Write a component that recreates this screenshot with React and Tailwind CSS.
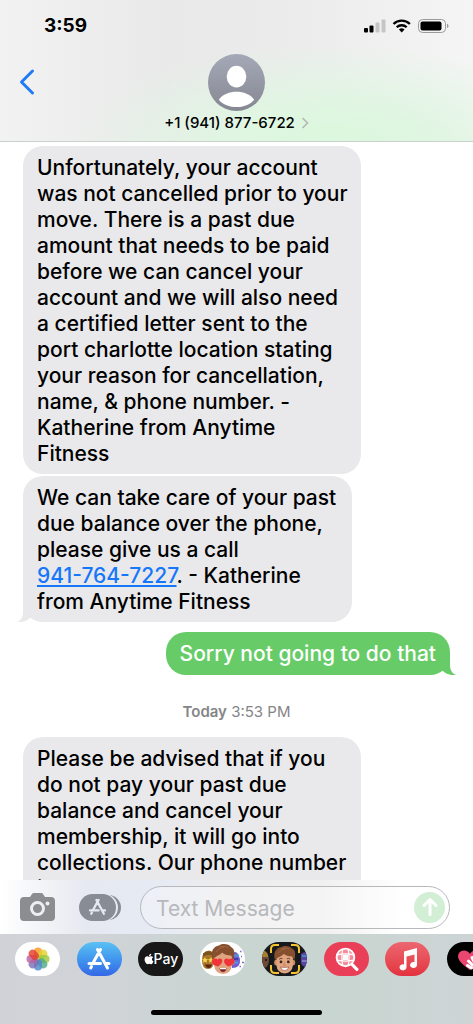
import React from 'react';
import { FaApple } from 'react-icons/fa';

const accountMessage = `Unfortunately, your account
was not cancelled prior to your
move. There is a past due
amount that needs to be paid
before we can cancel your
account and we will also need
a certified letter sent to the
port charlotte location stating
your reason for cancellation,
name, & phone number. -
Katherine from Anytime
Fitness`;

const collectionsMessage = `Please be advised that if you
do not pay your past due
balance and cancel your
membership, it will go into
collections. Our phone number
is 941-764-7227.`;

const StatusBar = () => (
  <div className="flex h-[52px] items-center justify-between pl-11 pr-6">
    <time className="text-[19px] font-bold leading-6">3:59</time>
    <svg viewBox="0 0 85 16" className="h-4 w-[85px]" aria-label="Signal, Wi-Fi and battery">
      <rect x="0" y="10" width="4" height="4.5" rx="1" />
      <rect x="5.5" y="7.5" width="4" height="7" rx="1" />
      <rect x="11.5" y="4.5" width="4" height="10" rx="1" fill="#c5c5c5" />
      <rect x="17.5" y="1.5" width="4" height="13" rx="1" fill="#c5c5c5" />
      <g fill="none" stroke="#000" strokeWidth="2.3">
        <path d="M29.5 6a11.8 11.8 0 0 1 16.4 0" />
        <path d="M32.7 9.3a7.1 7.1 0 0 1 10 0" />
      </g>
      <path d="M34.9 11.6a4 4 0 0 1 5.6 0l-2.8 2.9z" />
      <rect x="54.5" y="1.5" width="27" height="13" rx="4" fill="none" stroke="#9b9b9b" />
      <rect x="56.5" y="3.5" width="21" height="9" rx="2" />
      <path d="M83 5.8c2 .7 2 3.7 0 4.4z" fill="#9b9b9b" />
    </svg>
  </div>
);

const Header = () => (
  <header className="shrink-0 border-b border-[#c9cfca] bg-[radial-gradient(ellipse_55%_75%_at_70%_105%,#daf8dc_0%,#e0f6e2_40%,transparent_100%),linear-gradient(to_right,#f2f2f2,#e9e9e9_35%,#ebebeb_60%,#f5f5f5)]">
    <StatusBar />
    <div className="grid h-[89px] grid-cols-[1fr_auto_1fr] items-start">
      <button aria-label="Back" className="mt-4 ml-[18px] w-5">
        <svg viewBox="0 0 20 28" className="h-7 w-5" fill="none" stroke="#2079f5" strokeWidth="3" strokeLinecap="round" strokeLinejoin="round">
          <path d="M14.5 3 3.5 14l11 11" />
        </svg>
      </button>
      <button className="flex flex-col items-center pt-0.5">
        <svg viewBox="0 0 58 58" className="h-[57px] w-[57px]">
          <defs>
            <linearGradient id="avatar" x1="0" y1="0" x2="0" y2="1">
              <stop offset="0" stopColor="#a5a9b7" />
              <stop offset="1" stopColor="#858892" />
            </linearGradient>
          </defs>
          <circle cx="29" cy="29" r="29" fill="url(#avatar)" />
          <ellipse cx="29" cy="23" rx="10" ry="11" fill="#fff" />
          <path d="M11 46.5C15 41 22 38.5 29 38.5S43 41 47 46.5C43 51.5 36 54 29 54S15 51.5 11 46.5z" fill="#fff" />
        </svg>
        <span className="flex items-center gap-1.5 text-[15px] font-medium leading-6">
          +1 (941) 877-6722
          <svg viewBox="0 0 8 12" className="h-3 w-2" fill="none" stroke="#b3bbb4" strokeWidth="1.7">
            <path d="m1.5 1 5 5-5 5" />
          </svg>
        </span>
      </button>
    </div>
  </header>
);

const Messages = () => (
  <main className="flex min-h-0 flex-1 flex-col overflow-hidden bg-white px-[23px] pt-1 text-[21px] font-medium leading-[26px]">
    <p className="w-[338px] shrink-0 whitespace-pre rounded-[20px] bg-[#e9e9eb] px-3.5 pt-[9px] pb-[7px]">{accountMessage}</p>
    <div className="relative mt-0.5 w-[329px] shrink-0">
      <svg viewBox="0 0 24 22" className="absolute bottom-0 -left-1.5 h-[22px] w-6" fill="#e9e9eb">
        <path d="M6 0v12c0 5-2 8.5-6 10 5 .5 10-.8 13-4l11-4V0z" />
      </svg>
      <p className="relative whitespace-pre rounded-[20px] bg-[#e9e9eb] px-3.5 pt-[9px] pb-[7px]">
        {'We can take care of your past\ndue balance over the phone,\nplease give us a call\n'}
        <a href="tel:941-764-7227" className="text-[#1677fb] underline decoration-2 underline-offset-2">941-764-7227</a>
        {'. - Katherine\nfrom Anytime Fitness'}
      </p>
    </div>
    <div className="relative mt-2.5 shrink-0 self-end">
      <svg viewBox="0 0 24 22" className="absolute -right-1.5 bottom-0 h-[22px] w-6" fill="#67cc68">
        <path d="M18 0v12c0 5 2 8.5 6 10-5 .5-10-.8-13-4L0 14V0z" />
      </svg>
      <p className="relative rounded-[20px] bg-[#67cc68] px-3.5 pt-[9px] pb-2 text-white">Sorry not going to do that</p>
    </div>
    <p className="mt-[25px] mb-[13px] shrink-0 text-center text-[15px] leading-6 font-normal text-[#858587]">
      <span className="font-semibold">Today</span> 3:53 PM
    </p>
    <p className="w-[338px] shrink-0 whitespace-pre rounded-[20px] bg-[#e9e9eb] px-3.5 pt-[9px] pb-[7px]">{collectionsMessage}</p>
  </main>
);

const appStorePath = 'M13.5 2.5 6 16M10.5 2.5 20.5 21M2 16.5h11.5M18.5 16.5H22M4.5 19.5l-.8 1.5';

const ComposeBar = () => (
  <form className="flex h-[54px] shrink-0 items-center bg-[linear-gradient(to_right,#fff,#e6e9f0_18%,#e5eaf4_32%,#ececee_46%,#f0f0f0_68%,#fff_85%)] pr-[23px] pl-5" onSubmit={(e) => e.preventDefault()}>
    <button type="button" aria-label="Camera">
      <svg viewBox="0 0 35 28" className="h-7 w-[35px]">
        <path d="M4 4h6l2-3q.5-1 2-1h7q1.5 0 2 1l2 3h6q4 0 4 4v16q0 4-4 4H4q-4 0-4-4V8q0-4 4-4z" fill="#8c8d90" />
        <circle cx="17.5" cy="15.5" r="6" fill="none" stroke="#eceef1" strokeWidth="3" />
        <circle cx="27.5" cy="10.5" r="2" fill="#eceef1" />
      </svg>
    </button>
    <button type="button" aria-label="Apps" className="ml-6">
      <svg viewBox="0 0 42 27" className="h-[27px] w-[42px]">
        <rect x="10" y="1" width="32" height="25" rx="12.5" fill="#888c95" />
        <rect x="4" y="0" width="35" height="27" rx="13.5" fill="#e6eaf3" />
        <rect x="0" y="0" width="37" height="27" rx="13.5" fill="#888c95" />
        <path d={appStorePath} transform="translate(9.5 4) scale(.75)" fill="none" stroke="#e6e9ef" strokeWidth="3" strokeLinecap="round" />
      </svg>
    </button>
    <div className="ml-[19px] flex h-[43px] min-w-0 flex-1 items-center rounded-full border border-[#b7b8bb] bg-white/30 pr-1 pl-[15px]">
      <input aria-label="Text Message" placeholder="Text Message" className="min-w-0 flex-1 bg-transparent pt-[3px] text-[21px] leading-[26px] outline-none placeholder:text-[#b7b8bb]" />
      <button aria-label="Send" className="flex h-[31px] w-[31px] items-center justify-center rounded-full bg-[#d2efd5]">
        <svg viewBox="0 0 18 20" className="h-5 w-[18px]" fill="none" stroke="#fff" strokeWidth="3" strokeLinecap="round" strokeLinejoin="round">
          <path d="M9 17.5V3M3 8.5 9 2.5l6 6" />
        </svg>
      </button>
    </div>
  </form>
);

const PhotosIcon = () => (
  <svg viewBox="-12 -12 24 24" className="h-6 w-6">
    {['#f59a23', '#e0d22f', '#9cc83c', '#52ab88', '#4f88cb', '#7d70b6', '#b9609f', '#e2402f'].map((color, i) => (
      <rect key={color} x="-4" y="-11.5" width="8" height="11" rx="4" fill={color} opacity=".82" transform={`rotate(${i * 45})`} />
    ))}
  </svg>
);

// Shared face for the two sticker apps
const Face = ({ hearts }) => (
  <g>
    <ellipse cx="13.5" cy="20" rx="2" ry="3" fill="#cf8a63" />
    <ellipse cx="32.5" cy="20" rx="2" ry="3" fill="#cf8a63" />
    <path d="M14 15q0-5 9-5t9 5v8q-1 8.5-9 9-8-.5-9-9z" fill="#e0a580" />
    <path d="M12.5 17.5C10 9 14 4 19 3.5 23 1 29 2 31 5c4 2 4 7 2.5 12.5L31 13.500c-4 0-7-1-9-3-2 3-5 2.500-9.500 7z" fill="#86502f" />
    <path d="M16 10c2-3 5-4.5 8-4.5M19 5.500c3-1.500 6-1.500 9 0" fill="none" stroke="#a0653f" strokeWidth="1" />
    {hearts ? (
      <g>
        <path d="M18 24.5c-6-1.5-7-4.5-5.500-7 1.500-1.500 4-1.500 5 0 1-1.500 3.500-1.500 4.500 0 1 2.500-1 5-4 7zM28.500 24.500c-4-2-5-4.500-4-7 1-1.500 3.500-1.500 4.500 0 1-1.500 3.500-1.500 5 0 1.500 2.500-.5 5.500-5.500 7z" fill="#f0343a" />
        <path d="M19.500 26h7q-.5 4-3.500 4t-3.500-4z" fill="#7b252b" />
        <path d="M20 26h6v1.200h-6z" fill="#fff" />
      </g>
    ) : (
      <g>
        <circle cx="19" cy="19.500" r="1.500" fill="#3c2218" />
        <circle cx="27" cy="19.500" r="1.500" fill="#3c2218" />
        <path d="M17 16.500q2-1.500 3.500-.5M25.500 16q2-1 3.500.5" fill="none" stroke="#65351e" />
        <path d="m23 20-1 3q1 1 2 0" fill="none" stroke="#bd7a55" />
        <path d="M18.500 25q4.500 1 9 0-1 4-4.500 4t-4.500-4z" fill="#fff" stroke="#91463b" strokeWidth=".7" />
      </g>
    )}
  </g>
);

const StickersIcon = () => (
  <svg viewBox="0 0 45 34" className="h-full w-full">
    <path d="M2 18q0-9 7-9.500 5 .5 5 9.500t-6 9q-6 0-6-9z" fill="#a87427" />
    <path d="M3 11.500q5-4 10-1v3q-5-2-10 1z" fill="#7a5320" />
    <path d="m5 15 1 2 2 .2-1.500 1.500.5 2-2-1-2 1 .5-2L2 17.200l2-.2zM11 15l1 2 2 .2-1.500 1.500.5 2-2-1-2 1 .5-2L8 17.200l2-.2z" fill="#f6d44e" />
    <path d="M5 22.500h7q-1 3.500-3.500 3.500T5 22.500z" fill="#5a2715" />
    <path d="M32 12q3-4 6 0l2 5q1 9-8 9z" fill="#6d5fd3" />
    <path d="M33 13.500h6M33 20.500h5" stroke="#4c9be6" strokeWidth="2" />
    <path d="M34 17h4" stroke="#37309a" strokeWidth="1.500" />
    <path d="M40 9.500h1.500M42 20.500h2M41 14.500h1M39.500 24.500h1.500" stroke="#8c64dc" strokeWidth="1.500" />
    <Face hearts />
  </svg>
);

const MemojiIcon = () => (
  <svg viewBox="0 0 45 34" className="h-full w-full">
    <ellipse cx="2" cy="18" rx="5" ry="8" fill="#6b4b36" />
    <path d="M0 9q4-1 6 4v2H0z" fill="#a5802e" />
    <path d="M3 18h2" stroke="#2b1c14" strokeWidth="2" />
    <path d="M39 12q3-3 6-1v14q-5 0-6-4z" fill="#56449f" />
    <path d="M40 14h5" stroke="#4b83c4" strokeWidth="2" />
    <path d="M40 19h5" stroke="#8378c9" strokeWidth="2" />
    <g transform="translate(1.500 2) scale(.92)">
      <Face />
    </g>
    <path d="M9 11V7q0-4 4-4h4M29 3h4q4 0 4 4v4M37 23v4q0 4-4 4h-4M17 31h-4q-4 0-4-4v-4" fill="none" stroke="#f5c42e" strokeWidth="2" />
  </svg>
);

const ImageSearchIcon = () => (
  <svg viewBox="0 0 24 24" className="h-[25px] w-[25px]" fill="none" stroke="#fff" strokeWidth="1.5">
    <circle cx="11" cy="10" r="8.5" fill="#f28d9c" strokeWidth="1.8" />
    <path d="M3 7.500q8-2 16 0M3 12.500q8 2 16 0M8.500 2q-2 8 0 16M13.500 2q2 8 0 16" strokeWidth="1.2" />
    <path d="M8.500 7.500h5v5h-5z" fill="#fff" stroke="none" />
    <path d="m17.500 17 4.500 4.500" strokeWidth="3" strokeLinecap="round" />
  </svg>
);

const MusicIcon = () => (
  <svg viewBox="0 0 20 24" className="h-6 w-5" fill="#fff">
    <path d="M6 4.500 19 1v17a3.500 3 0 1 1-2.500-2.900V7.500l-8 2v10.800A3.500 3 0 1 1 6 17.500z" />
  </svg>
);

const HeartIcon = () => (
  <svg viewBox="0 0 45 34" className="h-full w-full">
    <path d="M23 28C13 21 9 16 12 11c3-4 9-3 11 1 2-4 8-5 11-1 3 5-1 10-11 17z" fill="#eb4670" />
    <g stroke="#fff" strokeWidth="3" strokeLinecap="round">
      <path d="m21.500 19 4 4M20.500 23.500l4 2.500M25 15.500l3 6" />
    </g>
  </svg>
);

const apps = [
  { name: 'Photos', bg: 'bg-white', icon: <PhotosIcon /> },
  {
    name: 'App Store',
    bg: 'bg-linear-to-b from-[#5ac1f3] to-[#3467e6]',
    icon: (
      <svg viewBox="0 0 24 24" className="h-6 w-6" fill="none" stroke="#fff" strokeWidth="3" strokeLinecap="round">
        <path d={appStorePath} />
      </svg>
    ),
  },
  {
    name: 'Apple Pay',
    bg: 'bg-[#181818]',
    icon: (
      <span className="flex items-center text-sm font-medium text-white">
        <FaApple className="h-3 w-2.5" />
        Pay
      </span>
    ),
  },
  { name: 'Stickers', bg: 'bg-white', icon: <StickersIcon /> },
  { name: 'Memoji', bg: 'bg-[#18191d]', icon: <MemojiIcon /> },
  { name: 'Image search', bg: 'bg-[#e94058]', icon: <ImageSearchIcon /> },
  { name: 'Music', bg: 'bg-linear-to-b from-[#ec6670] to-[#e3313e]', icon: <MusicIcon /> },
  { name: 'Digital Touch', bg: 'bg-black', icon: <HeartIcon /> },
];

const AppStrip = () => (
  <footer className="flex h-[90px] shrink-0 flex-col items-center justify-between overflow-hidden bg-[linear-gradient(to_right,#d0d2d7,#d0d3d7_20%,#c9d5d1_50%,#c9d5d1_75%,#ced4d6)] pt-2 pb-[9px]">
    <nav className="-mr-[19px] flex justify-between self-stretch pl-[15px]">
      {apps.map((app) => (
        <button key={app.name} aria-label={app.name} className={`flex h-[34px] w-[45px] items-center justify-center overflow-hidden rounded-full ${app.bg}`}>
          {app.icon}
        </button>
      ))}
    </nav>
    <div className="h-[5px] w-[36%] rounded-full bg-black" />
  </footer>
);

const App = () => (
  <div className="flex h-screen flex-col overflow-hidden bg-white font-[Inter,'Liberation_Sans',sans-serif] text-black">
    <Header />
    <Messages />
    <ComposeBar />
    <AppStrip />
  </div>
);

export default App;
